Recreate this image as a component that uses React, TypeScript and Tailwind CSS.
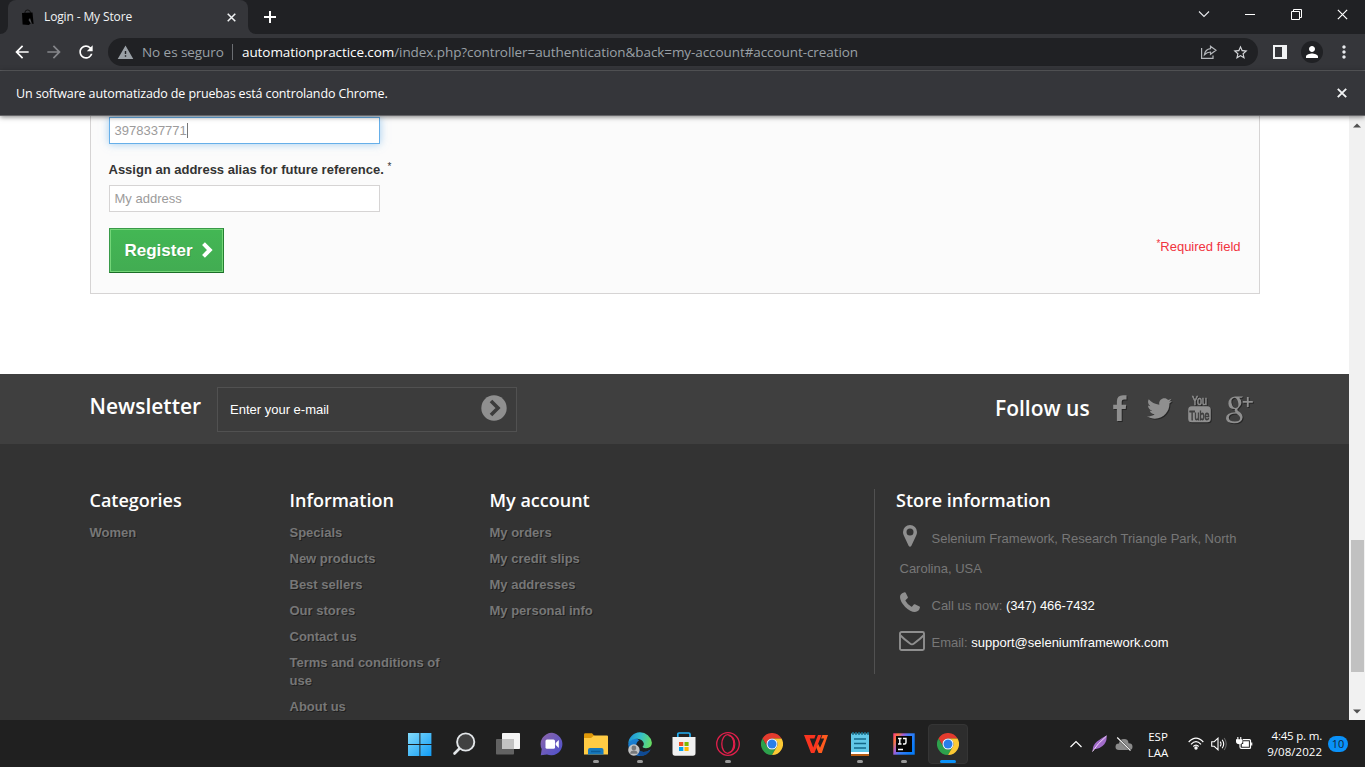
import React from "react";
import { FaTwitter } from "react-icons/fa";
import { MdArrowBack, MdArrowForward, MdRefresh, MdWarning, MdStarOutline, MdPerson, MdMoreVert } from "react-icons/md";

const ui = "font-['Open_Sans','Noto_Sans',sans-serif]";

function Cross({ size = 10, w = 1.8, color = "#f1f3f4" }: { size?: number; w?: number; color?: string }) {
  return (
    <svg width={size} height={size} viewBox="0 0 10 10" stroke={color} strokeWidth={w} fill="none">
      <path d="M0.8 0.8L9.2 9.2M9.2 0.8L0.8 9.2" />
    </svg>
  );
}

function TabStrip() {
  return (
    <div className={`flex h-[34px] shrink-0 bg-[#202124] ${ui}`}>
      <div className="flex w-2 items-end bg-[#35363a]">
        <div className="h-full w-2 rounded-br-lg bg-[#202124]" />
      </div>
      <div className="bg-[#202124]">
        <div className="flex h-[34px] w-[240px] items-center rounded-t-lg bg-[#35363a] pl-[13px] pr-[12px]">
          <svg width="14" height="17" viewBox="0 0 14 17">
            <path d="M4 5V3.2Q4 1 6.6 1T9.4 3.2V5" fill="none" stroke="#111" strokeWidth="1" />
            <path d="M1 4L11.5 3.5L12.6 15L9.6 14.2L8 16L1.6 15.6Z" fill="#000" />
            <path d="M7.5 11L9 9L11 15L9.3 13.4Z" fill="#4c4d50" />
          </svg>
          <span className="ml-[9px] flex-1 whitespace-nowrap text-[12px] tracking-[-0.13px] text-[#f1f3f4]">Login - My Store</span>
          <Cross size={9} w={1.7} />
        </div>
      </div>
      <div className="flex w-2 bg-[#35363a]">
        <div className="h-full w-2 rounded-bl-lg bg-[#202124]" />
      </div>
      <div className="flex w-7 items-center justify-center">
        <svg width="12" height="12" viewBox="0 0 12 12" stroke="#fff" strokeWidth="2">
          <path d="M6 0V12M0 6H12" />
        </svg>
      </div>
      <div className="flex-1" />
      <div className="flex items-center pb-[6px] pr-[17px]">
        <svg width="12" height="8" viewBox="0 0 12 8" fill="none" stroke="#e8eaed" strokeWidth="1.1">
          <path d="M1 1.5L6 6.5L11 1.5" />
        </svg>
        <div className="ml-[35px] h-px w-[10px] bg-white" />
        <svg className="ml-[36px]" width="11" height="11" viewBox="0 0 11 11" fill="none" stroke="#fff">
          <path d="M0.5 2.5H8.5V10.5H0.5ZM2.5 2.5V0.5H10.5V8.5H8.5" />
        </svg>
        <div className="ml-[35px]">
          <Cross size={11} w={1.1} color="#fff" />
        </div>
      </div>
    </div>
  );
}

function Toolbar() {
  return (
    <div className={`flex h-[37px] shrink-0 items-center border-b border-[#5d5e61] bg-[#35363a] ${ui}`}>
      <MdArrowBack className="ml-[12px] size-5 text-white" />
      <MdArrowForward className="ml-[12px] size-5 text-[#85868a]" />
      <MdRefresh className="ml-[12px] size-5 text-white" />
      <div className="ml-[12px] flex h-7 w-[1150px] items-center rounded-full bg-[#202124] pl-[9px] pr-[9px] text-[14px]">
        <MdWarning className="size-[17px] text-[#9aa0a6]" />
        <span className="ml-[8px] w-[82px] whitespace-nowrap text-[13.5px] tracking-[-0.06px] text-[#9aa0a6]">No es seguro</span>
        <div className="ml-[8px] h-4 w-px bg-[#6b6e72]" />
        <span className="ml-[9px] flex-1 whitespace-nowrap text-[13.5px] tracking-[-0.08px] text-[#9aa0a6]">
          <span className="text-white">automationpractice.com</span>/index.php?controller=authentication&amp;back=my-account#account-creation
        </span>
        <svg width="16" height="15" viewBox="0 0 16 15" fill="none" stroke="#b4b7bb" strokeWidth="1.2">
          <path d="M0.6 3V13.4H12V10.5" />
          <path d="M9.5 1.3L15 5.3L9.5 9.3V7Q6 7 3.4 9.8Q4.2 4.2 9.5 3.6Z" />
        </svg>
        <MdStarOutline className="ml-[15px] size-[17px] text-[#d5d7da]" />
      </div>
      <svg className="ml-[15px]" width="14" height="14" viewBox="0 0 14 14">
        <path d="M1 1H13V13H1Z" fill="none" stroke="#f1f3f4" strokeWidth="2" />
        <path d="M9 1H14V13H9Z" fill="#f1f3f4" />
      </svg>
      <div className="ml-[14px] flex size-[22px] items-center justify-center rounded-full bg-[#202124]">
        <MdPerson className="size-[18px] text-white" />
      </div>
      <MdMoreVert className="ml-[11px] size-5 text-[#e8eaed]" />
    </div>
  );
}

function InfoBar() {
  return (
    <div className={`relative z-10 flex h-[45px] shrink-0 items-center justify-between border-b border-[#656568] bg-[#35363a] pl-4 pr-[18px] shadow-[0_1px_5px_rgba(0,0,0,0.5)] ${ui}`}>
      <span className="whitespace-nowrap pt-[2px] text-[12.5px] tracking-[-0.13px] text-white">Un software automatizado de pruebas está controlando Chrome.</span>
      <Cross size={10} w={1.9} />
    </div>
  );
}

function AccountForm() {
  return (
    <div className="ml-[89.5px] flex h-[178px] w-[1170px] shrink-0 flex-col border border-t-0 border-[#d6d4d4] bg-[#fbfbfb] pl-[18px] pr-[18px] pt-px">
      <div className="flex h-[27px] w-[271px] shrink-0 items-center border border-[#66afe9] bg-white pl-[5px] text-[#9c9b9b] shadow-[0_0_8px_rgba(102,175,233,0.6)]">
        3978337771
        <div className="h-[15px] w-px bg-[#777]" />
      </div>
      <div className="mt-[17px] h-[18px] font-bold leading-[18px] text-[#333]">
        Assign an address alias for future reference. <sup className="top-[-4px] text-[10px] font-normal leading-none">*</sup>
      </div>
      <div className="mt-[6px] flex h-[27px] w-[271px] shrink-0 items-center border border-[#d6d4d4] bg-white pl-[5px] text-[#9c9b9b]">My address</div>
      <div className="mt-4 flex justify-between">
        <div className="h-[45px] w-[115px] border border-t-[#399a49] border-r-[#247f32] border-b-[#1a6d27] border-l-[#399a49] bg-[#43b754]">
          <div className="flex h-full items-center border border-[#74d578] bg-linear-to-b from-[#43b754] to-[#42ac52] pl-[14px] text-[17px] font-bold text-white [text-shadow:1px_1px_rgba(0,0,0,0.12)]">
            Register
            <svg className="-mt-[2px] ml-[9px]" width="11" height="16" viewBox="0 0 11 16" fill="none" stroke="#fff" strokeWidth="4">
              <path d="M1.5 1.6L7.8 8L1.5 14.4" />
            </svg>
          </div>
        </div>
        <div className="pt-[10px] leading-[18px] text-[#f13340]">
          <sup className="top-[-4px] text-[10px] leading-none">*</sup>Required field
        </div>
      </div>
    </div>
  );
}

function YouTubeStack() {
  return (
    <svg width="26" height="30" viewBox="0 0 26 30" className="drop-shadow-[1px_1px_0_rgba(0,0,0,0.4)]">
      <rect x="1.2" y="12.2" width="22.6" height="16" rx="3.5" fill="#8f8f8f" />
      <g transform="translate(12.5 10.7) scale(0.66 1)">
        <text textAnchor="middle" fontFamily="Liberation Sans" fontSize="13.5" fill="#8f8f8f" stroke="#8f8f8f" strokeWidth="0.7">You</text>
      </g>
      <g transform="translate(12.5 25.7) scale(0.66 1)">
        <text textAnchor="middle" fontFamily="Liberation Sans" fontSize="13.5" fill="#3f3f3f" stroke="#3f3f3f" strokeWidth="0.8">Tube</text>
      </g>
    </svg>
  );
}

function GooglePlus() {
  return (
    <svg width="28" height="28" viewBox="0 0 28 28" className="drop-shadow-[1px_1px_0_rgba(0,0,0,0.4)]" fill="#8f8f8f">
      <path fillRule="evenodd" d="M8.8 0.5H17.2L15.6 1.7H13.2Q15.4 3.6 15.4 6.8Q15.4 9.6 12.8 11.6Q11.2 12.8 11.3 13.7Q11.4 14.5 13.2 15.8Q16.8 18.4 16.6 21.4Q16 27.2 8 27.2Q0 27.2 0 22.3Q0 16.6 9.6 16.2Q8.2 14.9 8.9 13.1Q2.6 13.4 2.4 7.4Q2.6 1.4 8.8 0.5ZM8.6 1.7Q5 2.2 5.4 6.4Q6.4 11.9 9.8 11.9Q12.8 11.4 12.4 7.4Q11.4 1.8 8.6 1.7ZM10.3 17.4Q3 17.4 2.8 21.5Q2.8 25.5 8.9 25.6Q14.2 25.5 14.2 22Q14.1 20 10.3 17.4Z" />
      <path d="M20.9 1H22.7V5H26.8V6.8H22.7V11H20.9V6.8H16.8V5H20.9Z" />
    </svg>
  );
}

const heading = "font-['Open_Sans',sans-serif] font-semibold text-white whitespace-nowrap";

function NewsletterBand() {
  return (
    <div className="flex h-[70px] shrink-0 items-start bg-[#3f3f3f] pl-[89.5px] pt-[13px]">
      <div className={`w-[127.5px] pt-[7px] text-[21px] leading-[25px] ${heading}`}>Newsletter</div>
      <div className="flex h-[45px] w-[300px] items-center justify-between border border-[#515151] bg-[#3c3c3c] pl-3 pr-[9px] text-white">
        Enter your e-mail
        <svg className="-mt-1" width="26" height="26" viewBox="0 0 26 26">
          <circle cx="13" cy="13" r="12.7" fill="#8f8f8f" />
          <path d="M10 6L17 13L10 20" fill="none" stroke="#3c3c3c" strokeWidth="3.6" />
        </svg>
      </div>
      <div className={`ml-[478px] w-[118px] pt-[9px] text-[21px] leading-[25px] ${heading}`}>Follow us</div>
      <div className="flex items-start pt-[8px] text-[#8f8f8f]">
        <svg width="14" height="27" viewBox="0 0 14 27" className="drop-shadow-[1px_1px_0_rgba(0,0,0,0.4)]" fill="#8f8f8f">
          <path d="M13.5 0.3V4.6H11Q8.7 4.6 8.7 6.8V9.8H13.2L12.7 14.1H8.7V26H3.9V14.1H0.2V9.8H3.9V6.3Q3.9 0.2 10 0.2Q12.4 0.1 13.5 0.3Z" />
        </svg>
        <FaTwitter className="ml-[20px] mt-px size-[25px] drop-shadow-[1px_1px_0_rgba(0,0,0,0.4)]" />
        <div className="-mt-px ml-[15px]"><YouTubeStack /></div>
        <div className="ml-[13px] mt-px"><GooglePlus /></div>
      </div>
    </div>
  );
}

function LinkColumn({ title, links }: { title: string; links: string[] }) {
  return (
    <div className="w-[200px] pr-[30px]">
      <div className={`text-[18px] leading-[22px] ${heading}`}>{title}</div>
      <ul className="flex flex-col gap-2 pt-[13px] font-bold leading-[18px] text-[#777] [text-shadow:1px_1px_rgba(0,0,0,0.4)]">
        {links.map((l) => (
          <li key={l}>{l}</li>
        ))}
      </ul>
    </div>
  );
}

function StoreInformation() {
  return (
    <div className="ml-[184.5px] h-[185px] w-[386px] border-l border-[#515151] pl-5">
      <div className={`pl-px text-[18px] leading-[22px] ${heading}`}>Store information</div>
      <div className="pl-[4.5px] pt-[13px] text-[#777]">
        <div className="flex h-[30px] items-center">
          <svg className="-mt-[6px] ml-[3px] mr-[15px]" width="14" height="22" viewBox="0 0 14 22" fill="#8f8f8f">
            <path fillRule="evenodd" d="M7 0A7 7 0 0 1 14 7Q14 8.8 13.3 10.2L8.4 20.7Q7 22.6 5.6 20.7L0.7 10.2Q0 8.8 0 7A7 7 0 0 1 7 0ZM7 3.5A3.5 3.5 0 1 0 7 10.5A3.5 3.5 0 1 0 7 3.5Z" />
          </svg>
          <span className="whitespace-nowrap">Selenium Framework, Research Triangle Park, North</span>
        </div>
        <div className="leading-[30px]">Carolina, USA</div>
        <div className="mt-[7px] flex h-[30px] items-center">
          <svg className="-mt-[8px] mr-[12px]" width="20" height="20" viewBox="0 0 20 20" fill="#8f8f8f">
            <path d="M4.6 0.2Q5.4 0 5.7 0.7L7.8 5.1Q8.1 5.8 7.5 6.3L5.7 8Q5.3 8.5 5.6 9.1Q7.6 12.7 11.1 14.6Q11.7 14.9 12.1 14.4L13.8 12.5Q14.3 12 14.9 12.3L19.5 14.6Q20.1 14.9 19.9 15.6Q19 19.9 14.9 20Q10.4 20 5.2 14.9Q0 9.5 0 5Q0.1 1.2 4.6 0.2Z" />
          </svg>
          <span>Call us now: <span className="text-white">(347) 466-7432</span></span>
        </div>
        <div className="mt-[7px] flex h-[30px] items-center">
          <svg className="-ml-[1px] -mt-[5px] mr-[7px]" width="26" height="20" viewBox="0 0 26 20" fill="none" stroke="#8f8f8f" strokeWidth="1.9">
            <rect x="1" y="1" width="24" height="18" rx="1.5" />
            <path d="M1.5 4.5C5 8 8 10.3 11 12.6Q13 14.1 15 12.6C18 10.3 21 8 24.5 4.5" />
          </svg>
          <span>Email: <span className="text-white">support@seleniumframework.com</span></span>
        </div>
      </div>
    </div>
  );
}

function ScrollBar() {
  return (
    <div className="flex w-4 shrink-0 flex-col items-center bg-[#f1f1f1] pt-[7px]">
      <svg width="8" height="5" viewBox="0 0 8 5"><path d="M0 4.5L4 0.5L8 4.5Z" fill="#505050" /></svg>
      <div className="mt-[412px] h-[132px] w-[13px] bg-[#c1c1c1]" />
      <svg className="mt-[37px]" width="8" height="5" viewBox="0 0 8 5"><path d="M0 0.5L4 4.5L8 0.5Z" fill="#505050" /></svg>
    </div>
  );
}

function ChromeIcon() {
  return (
    <svg width="22" height="22" viewBox="0 0 24 24">
      <path d="M12 6H22.4A12 12 0 0 0 1.6 6L6.8 15A6 6 0 0 1 12 6Z" fill="#e33b2e" />
      <path d="M6.8 15L1.6 6A12 12 0 0 0 12 24L17.2 15A6 6 0 0 1 6.8 15Z" fill="#2da14c" />
      <path d="M17.2 15L12 24A12 12 0 0 0 22.4 6H12A6 6 0 0 1 17.2 15Z" fill="#fcc934" />
      <circle cx="12" cy="12" r="6" fill="#fff" />
      <circle cx="12" cy="12" r="4.9" fill="#2a7de9" />
    </svg>
  );
}

const taskIcons: { name: string; state?: "open" | "active"; icon: React.ReactNode }[] = [
  {
    name: "start",
    icon: (
      <svg width="24" height="24" viewBox="0 0 24 24">
        <defs><linearGradient id="win" gradientUnits="userSpaceOnUse" x1="0" y1="0" x2="24" y2="24"><stop stopColor="#85dcfb" /><stop offset="1" stopColor="#0f9bf5" /></linearGradient></defs>
        <path d="M0 1H11.4V12H0ZM12.4 1H23.4V12H12.4ZM0 13H11.4V24H0ZM12.4 13H23.4V24H12.4Z" fill="url(#win)" />
      </svg>
    ),
  },
  {
    name: "search",
    icon: (
      <svg width="24" height="24" viewBox="0 0 24 24" fill="none" stroke="#e3e6e9">
        <path d="M8 16L2.5 21.5" strokeWidth="2.6" strokeLinecap="round" />
        <circle cx="13.7" cy="10" r="8.6" fill="#414141" strokeWidth="1.9" />
      </svg>
    ),
  },
  {
    name: "task view",
    icon: (
      <svg width="24" height="24" viewBox="0 0 24 24">
        <rect x="6" y="1" width="18" height="16" rx="0.8" fill="#f4f4f4" />
        <rect x="0" y="7" width="18" height="15.5" rx="0.8" fill="#626262" />
        <rect x="6" y="7" width="12" height="10" fill="#c2c2c2" />
      </svg>
    ),
  },
  {
    name: "chat",
    icon: (
      <svg width="24" height="24" viewBox="0 0 24 24">
        <defs><linearGradient id="chat" x1="0" y1="0" x2="1" y2="1"><stop stopColor="#8d65a8" /><stop offset="1" stopColor="#4b50cf" /></linearGradient></defs>
        <path d="M12 0.8A11.3 11.3 0 1 1 7 22.6L0.8 23.3L1.7 17A11.3 11.3 0 0 1 12 0.8Z" fill="url(#chat)" />
        <rect x="5.5" y="7.4" width="9.5" height="9.3" rx="1.5" fill="#fff" />
        <path d="M15.7 11L18.8 8V16L15.7 13Z" fill="#fff" />
      </svg>
    ),
  },
  {
    name: "files",
    state: "open",
    icon: (
      <svg width="24" height="24" viewBox="0 0 24 24">
        <path d="M0 2.5Q0 1.3 1.2 1.3H8L10.5 3.9V6.5H0Z" fill="#df9808" />
        <path d="M0 6H7L10 3.5H23Q24 3.5 24 4.5V22.5H0Z" fill="#ffcb44" />
        <path d="M4 22.5V18Q4 16 6 16H17.5Q19.5 16 19.5 18V22.5Z" fill="#1779bd" />
        <path d="M7 19.5H16.5" stroke="#0b5c98" strokeWidth="1.5" />
      </svg>
    ),
  },
  {
    name: "edge",
    state: "open",
    icon: (
      <svg width="24" height="24" viewBox="0 0 24 24">
        <defs>
          <linearGradient id="edge" x1="0" y1="0.3" x2="1" y2="0.5"><stop stopColor="#1b8fd8" /><stop offset="0.5" stopColor="#35bfc9" /><stop offset="1" stopColor="#67dc62" /></linearGradient>
          <linearGradient id="edge-low" x1="0" y1="0" x2="0.6" y2="1"><stop stopColor="#1a86d9" /><stop offset="1" stopColor="#1262b5" /></linearGradient>
        </defs>
        <path d="M0.2 12Q2 6.5 8 6.8Q10.5 7 11 8.5Q7.8 10.5 8.3 14Q9.5 19.5 15.5 20Q19 20 22.6 17.5Q19.5 23.8 12 23.9Q1 23.5 0.2 12Z" fill="url(#edge-low)" />
        <path d="M8.5 12.5Q9.5 19.5 15.5 20Q19 20 22.6 17.5Q19.5 23.8 12.5 23.9Q5 19.5 8.5 12.5Z" fill="#0f4a94" />
        <path d="M0.2 11.5A11.9 11.9 0 0 1 23.9 10.8Q23.8 16.2 18 16.3Q14.6 16.2 14.6 14.6Q16 13.4 15.8 11.6Q15 7.4 9.2 6.8Q3 6.8 0.2 11.5Z" fill="url(#edge)" />
        <circle cx="5.9" cy="18" r="5.7" fill="#c2c3c4" />
        <circle cx="5.9" cy="16" r="2.4" fill="#77797b" />
        <path d="M2.2 21.8Q2.2 18.6 5.9 18.6T9.6 21.8Z" fill="#77797b" />
      </svg>
    ),
  },
  {
    name: "store",
    icon: (
      <svg width="24" height="24" viewBox="0 0 24 24">
        <path d="M5.8 6V2.2Q5.8 1 7 1H16.8Q18 1 18 2.2V6" fill="none" stroke="#21aef3" strokeWidth="1.7" />
        <path d="M0.5 5H23.5V21Q23.5 23.7 21 23.7H3Q0.5 23.7 0.5 21Z" fill="#f0f0f0" />
        <path d="M7 10H11.3V14H7Z" fill="#f25022" /><path d="M12.5 10H16.6V14H12.5Z" fill="#7fba00" />
        <path d="M7 15H11.3V19H7Z" fill="#00a4ef" /><path d="M12.5 15H16.6V19H12.5Z" fill="#ffb900" />
      </svg>
    ),
  },
  {
    name: "opera",
    state: "open",
    icon: (
      <svg width="24" height="24" viewBox="0 0 24 24" fill="none" stroke="#e11f4b">
        <circle cx="12" cy="12" r="11.3" strokeWidth="1.3" />
        <ellipse cx="11.8" cy="12" rx="6" ry="9.3" strokeWidth="1.3" />
        <path d="M12.5 3.4Q18.8 4.5 18.8 12T12.5 20.6" strokeWidth="1.2" />
      </svg>
    ),
  },
  { name: "chrome", icon: <ChromeIcon /> },
  {
    name: "wps",
    icon: (
      <svg width="24" height="24" viewBox="0 0 24 24">
        <path d="M0 3H11.6L10.4 6.4H5.8L9.2 15.4L14 3H17.6L10.4 21H7Z" fill="#f9341f" />
        <path d="M18.4 3H24L17.8 21H14.6L12.4 15.8L14 11.6L16 15.8L20.2 6.4H17Z" fill="#ff5a1e" />
      </svg>
    ),
  },
  {
    name: "notepad",
    state: "open",
    icon: (
      <svg width="24" height="24" viewBox="0 0 24 24">
        <rect x="3" y="1.5" width="18" height="20" fill="#62c8e8" />
        <path d="M5 0V3M8 0V3M11 0V3M14 0V3M17 0V3M20 0V3" stroke="#17718f" strokeWidth="1.5" />
        <path d="M6 7H18M6 11.5H18M6 16H18" stroke="#146889" strokeWidth="1.7" />
        <path d="M3 20H21V22H3Z" fill="#fff" /><path d="M3 22H21V24H3Z" fill="#b85d13" />
      </svg>
    ),
  },
  {
    name: "idea",
    state: "open",
    icon: (
      <svg width="22" height="22" viewBox="0 0 22 22">
        <defs><linearGradient id="idea" x1="0" y1="0" x2="1" y2="0.5"><stop stopColor="#ff318c" /><stop offset="0.2" stopColor="#f97a3d" /><stop offset="0.4" stopColor="#a05cd8" /><stop offset="0.6" stopColor="#3f7cf5" /><stop offset="1" stopColor="#087cfa" /></linearGradient></defs>
        <rect x="0.3" y="0.3" width="21.4" height="21.4" fill="url(#idea)" />
        <rect x="3" y="3" width="16" height="16" fill="#050505" />
        <path d="M5 5.5H8.5M6.8 5.5V11M5 11H8.5M10 5.5H13V9.5Q13 11 11.5 11H10M5 16.5H10" fill="none" stroke="#fff" strokeWidth="1.4" />
      </svg>
    ),
  },
  { name: "chrome-active", state: "active", icon: <ChromeIcon /> },
];

function Taskbar() {
  return (
    <div className="flex h-[47px] shrink-0 bg-[#202020] pl-[398px]">
      {taskIcons.map((t) => (
        <div key={t.name} className="flex w-11 flex-col items-center pt-1">
          <div className={t.state === "active" ? "flex h-10 w-10 flex-col items-center rounded-[4px] border border-[#353535] bg-[#2d2d2d]" : "flex h-10 w-10 flex-col items-center border border-transparent"}>
            <div className="flex h-[38px] w-full shrink-0 items-center justify-center">{t.icon}</div>
            {t.state === "open" && <div className="-mt-[3px] h-[3px] w-[6px] shrink-0 rounded-full bg-[#989898]" />}
            {t.state === "active" && <div className="-mt-[3px] h-[3px] w-4 shrink-0 rounded-full bg-[#0a91f8]" />}
          </div>
        </div>
      ))}
      <div className={`flex flex-1 items-center pl-[100px] text-[11.5px] leading-[16px] text-white ${ui}`}>
        <svg width="12" height="8" viewBox="0 0 12 8" fill="none" stroke="#fff" strokeWidth="1.2"><path d="M0.5 7L6 1.5L11.5 7" /></svg>
        <svg className="ml-[10px]" width="15" height="17" viewBox="0 0 15 17">
          <path d="M0.5 16.5Q0.5 10 5 6.5T14.5 0.5Q15.5 7 10.5 11T2.5 13.8Z" fill="#a16bc9" />
          <path d="M0.5 16.5Q5 9 14.5 1" fill="none" stroke="#f0d5fa" strokeWidth="1" />
        </svg>
        <svg className="ml-[8px]" width="18" height="14" viewBox="0 0 18 14">
          <path d="M4 13Q0.5 13 0.5 9.8T4 6.5Q4.5 2 9 2T13.5 6.3Q17.5 6.3 17.5 9.7T14 13Z" fill="#8b8b8b" />
          <path d="M2.2 0.5L15.5 13.5" stroke="#202020" strokeWidth="2" /><path d="M2.2 0.5L15.5 13.5" stroke="#f5f5f5" strokeWidth="1.1" />
        </svg>
        <div className="ml-[11px] w-[28px] pt-[2px] text-center">ESP<br />LAA</div>
        <svg className="ml-[16px]" width="16" height="13" viewBox="0 0 16 13" fill="none" stroke="#fff" strokeWidth="1.2">
          <path d="M0.7 5Q8 -2.8 15.3 5M3 7.3Q8 2 13 7.3M5.3 9.5Q8 6.6 10.7 9.5" /><circle cx="8" cy="11" r="1.1" fill="#fff" />
        </svg>
        <svg className="ml-[7px]" width="16" height="14" viewBox="0 0 16 14" fill="none" stroke="#fff" strokeWidth="1.1">
          <path d="M0.7 4.7H3.2L7 1.2V12.8L3.2 9.3H0.7ZM9.2 4.6Q10.8 7 9.2 9.4M11.2 2.7Q14.2 7 11.2 11.3" /><path d="M13.2 1Q17.3 7 13.2 13" stroke="#666" />
        </svg>
        <svg className="ml-[9px]" width="17" height="13" viewBox="0 0 17 13" fill="none" stroke="#fff" strokeWidth="1.2">
          <path d="M7 2.6H13.5Q14.5 2.6 14.5 3.6V10.4Q14.5 11.4 13.5 11.4H5.5Q4 11.4 4 10V7" />
          <path d="M7.2 4.2H12.9V9.8H5.8V7H7.2Z" fill="#fff" stroke="none" /><path d="M15.7 5.5V8.5" />
          <path d="M0 2.3H6.5V4.5Q6.5 7.3 3.3 7.3T0 4.5ZM1.3 0H2.4V2.5H1.3ZM4.2 0H5.3V2.5H4.2Z" fill="#fff" stroke="none" />
        </svg>
        <div className="ml-[9px] flex w-[60px] flex-col items-end whitespace-nowrap text-right"><span className="tracking-[-0.2px]">4:45 p. m.</span><span className="tracking-[0.03px]">9/08/2022</span></div>
        <div className="ml-[6px] flex h-4 w-5 items-center justify-center rounded-full bg-[#0a91f8] text-[11px] text-[#102438]">10</div>
      </div>
    </div>
  );
}

export default function App() {
  return (
    <div className="flex h-[767px] w-[1365px] flex-col overflow-hidden bg-white font-['Liberation_Sans',Arial,sans-serif]">
      <TabStrip />
      <Toolbar />
      <InfoBar />
      <div className="flex h-[604px] shrink-0 overflow-hidden">
        <div className="flex w-[1349px] flex-col bg-white text-[13px]">
          <AccountForm />
          <div className="h-20 shrink-0" />
          <NewsletterBand />
          <div className="flex flex-1 items-start overflow-hidden bg-[#333] pl-[89.5px] pt-[45px]">
            <LinkColumn title="Categories" links={["Women"]} />
            <LinkColumn title="Information" links={["Specials", "New products", "Best sellers", "Our stores", "Contact us", "Terms and conditions of use", "About us"]} />
            <LinkColumn title="My account" links={["My orders", "My credit slips", "My addresses", "My personal info"]} />
            <StoreInformation />
          </div>
        </div>
        <ScrollBar />
      </div>
      <Taskbar />
    </div>
  );
}
